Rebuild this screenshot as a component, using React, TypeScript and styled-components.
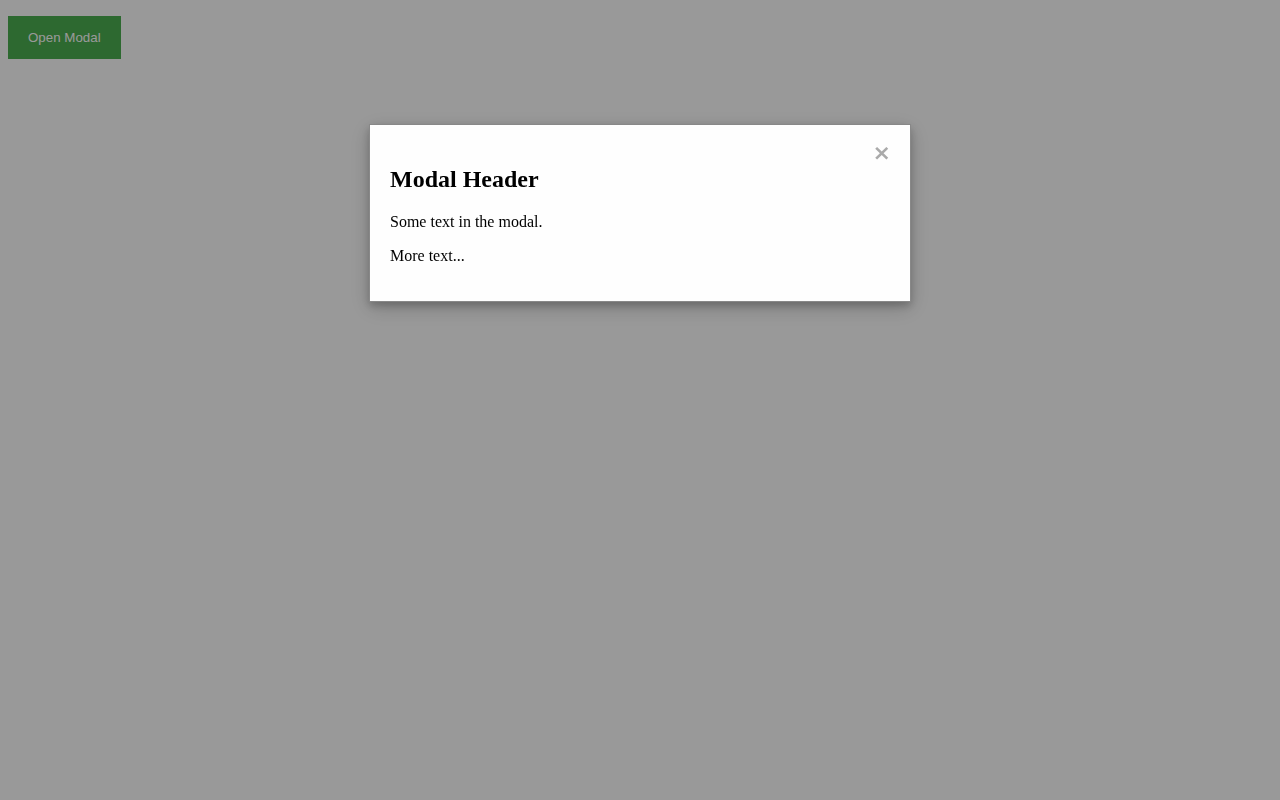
import React from "react";
import styled, { createGlobalStyle } from "styled-components";

const Global = createGlobalStyle`
  html, body { margin: 0; padding: 0; }
  body {
    margin: 8px;
    font-family: "Liberation Serif", "Times New Roman", serif;
    background: #fff;
  }
`;

const OpenButton = styled.button`
  margin-top: 8px;
  background: #4caf50;
  color: #fff;
  border: none;
  padding: 14px 20px;
  font-family: "Liberation Sans", Arial, sans-serif;
  font-size: 13.333px;
  cursor: pointer;
`;

const Overlay = styled.div`
  position: fixed;
  inset: 0;
  z-index: 1;
  background: rgba(0, 0, 0, 0.4);
  padding-top: 124px;
  overflow: auto;
`;

const Content = styled.div`
  box-sizing: border-box;
  width: 542px;
  margin: 0 auto;
  background: #fefefe;
  border: 1px solid #888;
  padding: 20px;
  box-shadow: 0 4px 8px 0 rgba(0, 0, 0, 0.2), 0 6px 20px 0 rgba(0, 0, 0, 0.19);
`;

const Close = styled.span`
  float: right;
  color: #aaa;
  font-family: "DejaVu Sans", sans-serif;
  font-size: 22px;
  font-weight: bold;
  line-height: 1;
  margin-top: -3px;
  margin-right: -1px;
  cursor: pointer;
`;

const Title = styled.h2`
  font-size: 24px;
  font-weight: bold;
  margin: 21px 0 20px;
`;

const Text = styled.p`
  font-size: 16px;
  margin: 16px 0;
`;

export default function App() {
  return (
    <>
      <Global />
      <OpenButton>Open Modal</OpenButton>
      <Overlay>
        <Content>
          <Close>&times;</Close>
          <Title>Modal Header</Title>
          <Text>Some text in the modal.</Text>
          <Text>More text...</Text>
        </Content>
      </Overlay>
    </>
  );
}
